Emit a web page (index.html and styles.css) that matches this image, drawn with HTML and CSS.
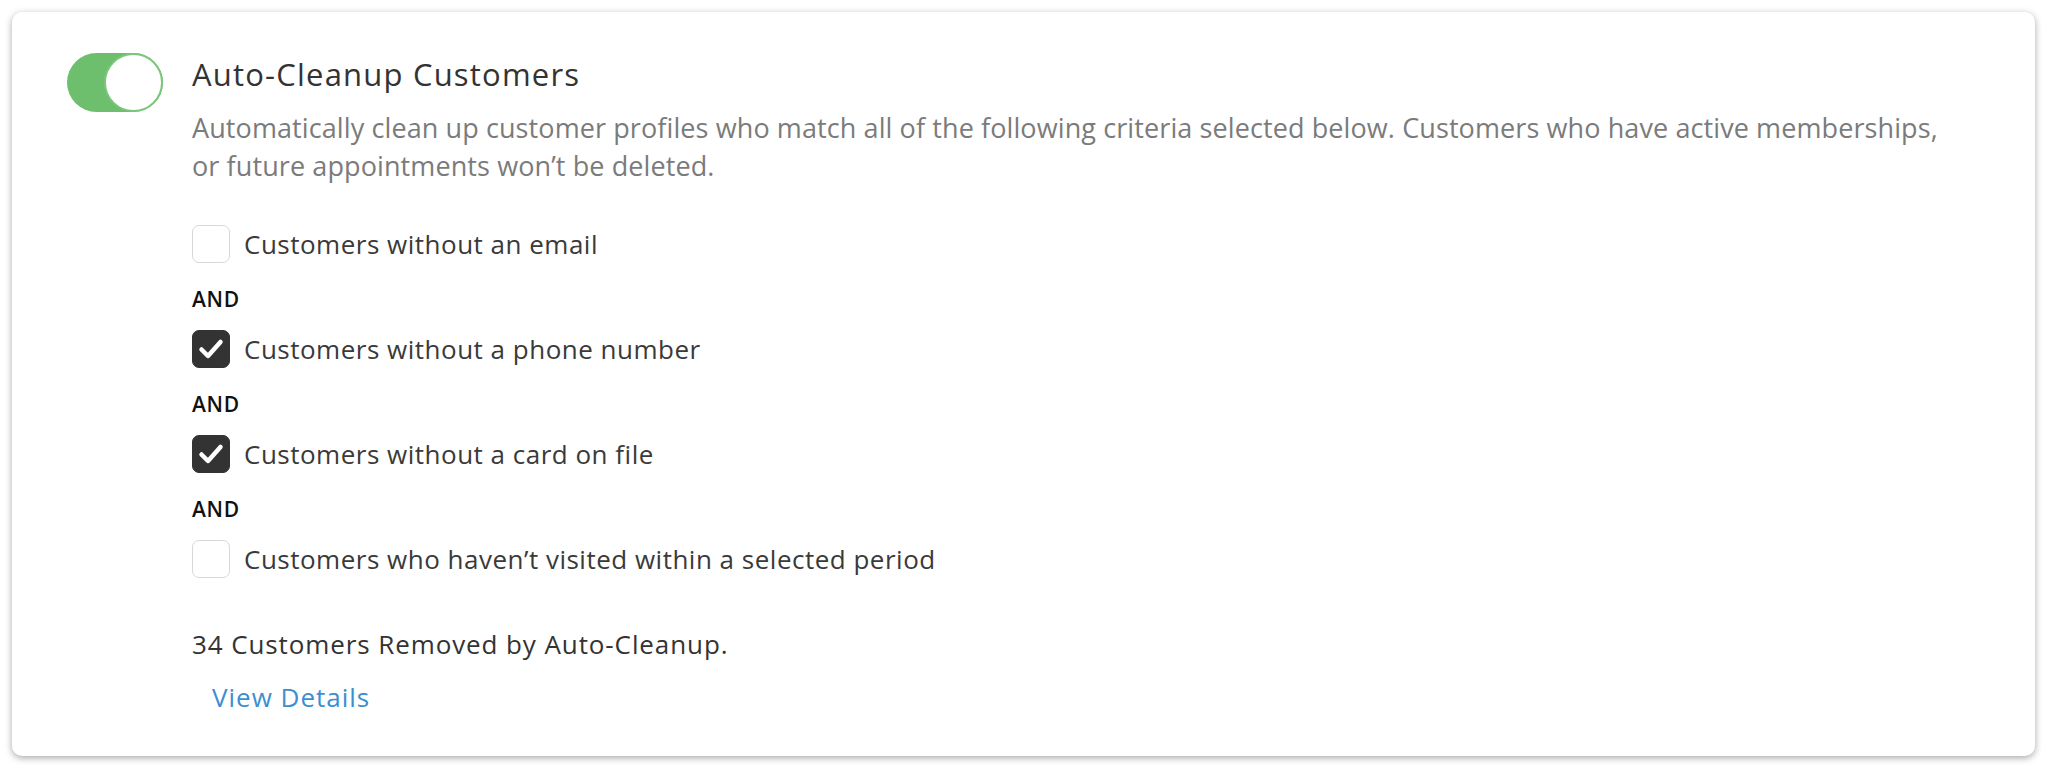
FILE: index.html
```html
<!DOCTYPE html>
<html>
    <head>
        <title>Auto-Cleanup Customers</title>
        <meta charset="UTF-8">
        <link rel="stylesheet" href="styles.css">
    </head>
    <body>
        <div class="card">
            <div class="toggle on">
                <span class="knob"></span>
            </div>
            <div class="content">
                <p class="title">Auto-Cleanup Customers</p>
                <p class="desc">Automatically clean up customer profiles who match all of the following criteria selected below. Customers who have active memberships,<br>or future appointments won’t be deleted.</p>
                <div class="criteria">
                    <label class="item">
                        <span class="box"></span>
                        <span>Customers without an email</span>
                    </label>
                    <p class="and">AND</p>
                    <label class="item">
                        <span class="box checked">
                            <svg width="28" height="28" viewBox="0 0 28 28"><path d="M4.5 14.5 L11 21 L23.5 7" fill="none" stroke="#fff" stroke-width="4.5" stroke-linecap="round" stroke-linejoin="round"/></svg>
                        </span>
                        <span>Customers without a phone number</span>
                    </label>
                    <p class="and">AND</p>
                    <label class="item">
                        <span class="box checked">
                            <svg width="28" height="28" viewBox="0 0 28 28"><path d="M4.5 14.5 L11 21 L23.5 7" fill="none" stroke="#fff" stroke-width="4.5" stroke-linecap="round" stroke-linejoin="round"/></svg>
                        </span>
                        <span>Customers without a card on file</span>
                    </label>
                    <p class="and">AND</p>
                    <label class="item">
                        <span class="box"></span>
                        <span>Customers who haven’t visited within a selected period</span>
                    </label>
                </div>
                <p class="removed">34 Customers Removed by Auto-Cleanup.</p>
                <a class="details" href="#">View Details</a>
            </div>
        </div>
    </body>
</html>
```

FILE: styles.css
```css
body{
    margin: 0;
    padding: 12px 13px 13px 12px;
    background: #fff;
    font-family: "Open Sans", "Liberation Sans", sans-serif;
}

p{
    margin: 0;
}

.card{
    display: flex;
    align-items: flex-start;
    gap: 29px;
    height: 744px;
    box-sizing: border-box;
    padding: 41px 20px 0 55px;
    background: #fff;
    border-radius: 10px;
    box-shadow: 0 2px 7px rgba(0, 0, 0, 0.35);
}

.toggle{
    position: relative;
    flex: none;
    width: 96px;
    height: 59px;
    border-radius: 30px;
    background: #6dbf6d;
}

.knob{
    position: absolute;
    top: 0;
    right: 0;
    width: 59px;
    height: 59px;
    box-sizing: border-box;
    border-radius: 50%;
    border: 2px solid #7cc67c;
    background: #fff;
}

.content{
    display: flex;
    flex-direction: column;
    align-items: flex-start;
}

.title{
    margin-top: 1px;
    font-size: 31px;
    line-height: 40px;
    letter-spacing: 1.2px;
    color: #333;
}

.desc{
    margin-top: 15px;
    font-size: 27px;
    line-height: 38px;
    letter-spacing: 0.1px;
    color: #7b7b7b;
}

.criteria{
    display: flex;
    flex-direction: column;
    margin-top: 40px;
}

.item{
    display: flex;
    align-items: center;
    gap: 14px;
    height: 38px;
    font-size: 26px;
    letter-spacing: 0.5px;
    color: #3a3a3a;
}

.box{
    display: flex;
    align-items: center;
    justify-content: center;
    width: 38px;
    height: 38px;
    box-sizing: border-box;
    border: 1px solid #d8d8d8;
    border-radius: 7px;
    background: #fff;
}

.box.checked{
    border-color: #333;
    background: #333;
}

.and{
    margin: 24px 0 19px;
    font-size: 21px;
    line-height: 24px;
    letter-spacing: 0.7px;
    font-weight: 600;
    color: #111;
}

.removed{
    margin-top: 51px;
    font-size: 26px;
    line-height: 30px;
    letter-spacing: 0.9px;
    color: #333;
}

.details{
    margin: 23px 0 0 20px;
    font-size: 26px;
    line-height: 30px;
    letter-spacing: 1px;
    color: #3b8fd1;
    text-decoration: none;
}
```
